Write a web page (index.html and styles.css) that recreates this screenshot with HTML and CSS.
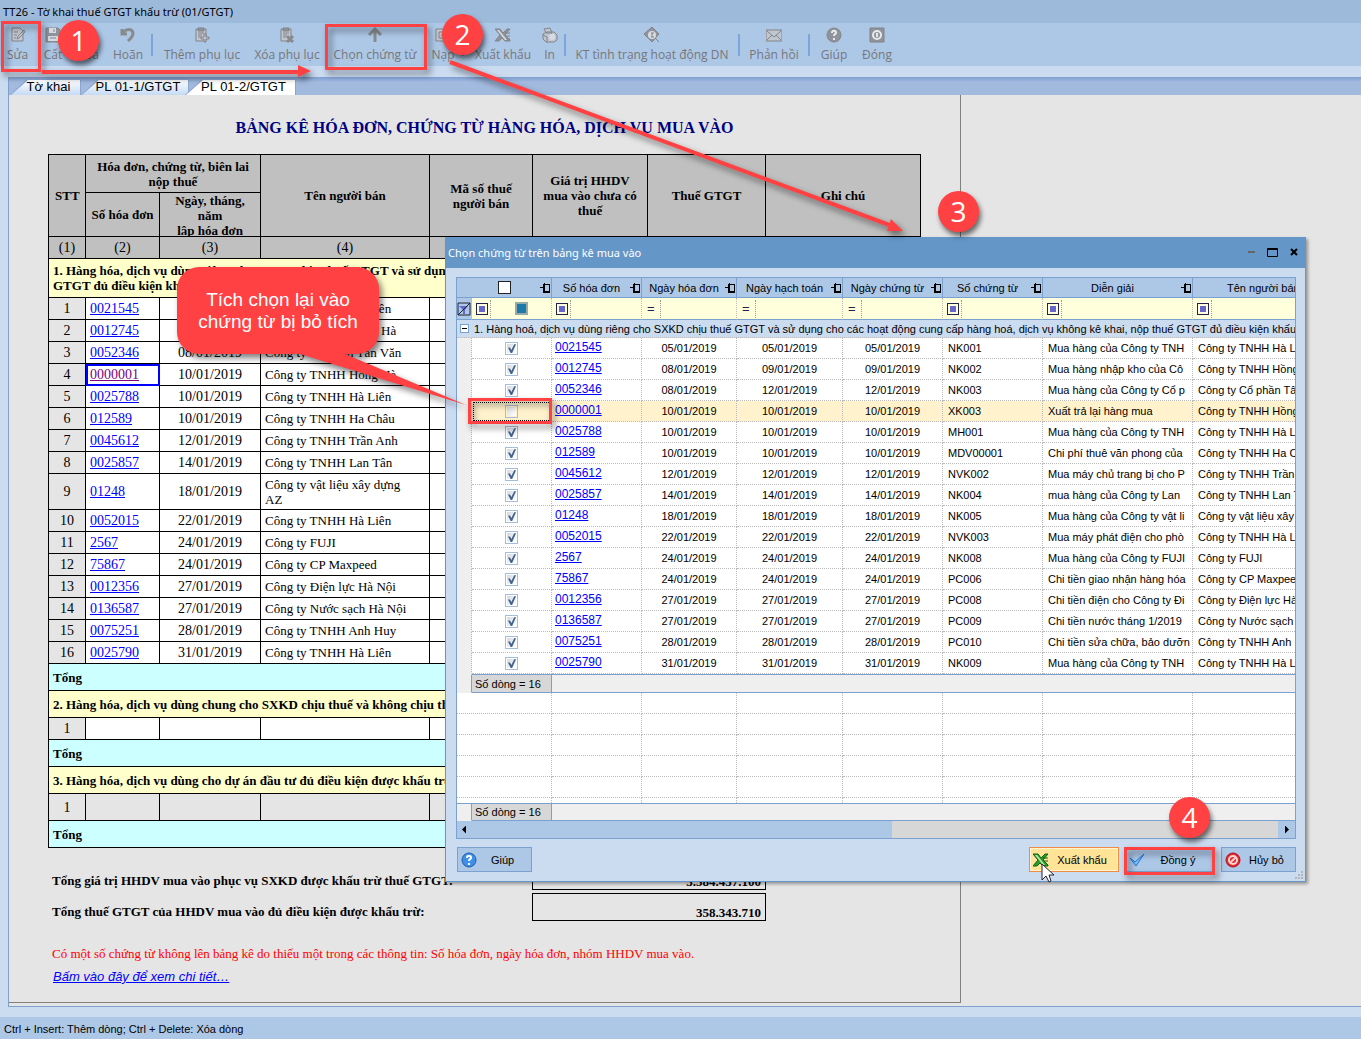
FILE: index.html
```html
<!DOCTYPE html>
<html lang="vi">
<head>
<meta charset="utf-8">
<title>TT26 - Tờ khai thuế GTGT khấu trừ (01/GTGT)</title>
<link rel="stylesheet" href="styles.css">
</head>
<body>
<header class="titlebar">TT26 - Tờ khai thuế GTGT khấu trừ (01/GTGT)</header>
<nav class="toolbar">
  <button class="tool"><svg viewBox="0 0 16 16"><path class="f" d="M2 1h8l3 3v10H2z"/><path d="M4 5h4M4 8h3M4 11h2M7 12l1-3 6-6 1 2-6 6z"/></svg>Sửa</button>
  <button class="tool"><svg viewBox="0 0 16 16"><path class="d" d="M1 1h12l2 2v12H1z"/><path class="l" d="M4 1h7v5H4zM3 9h10v5H3z"/><path d="M9 2v3M5 11h6"/></svg>Cất</button>
  <button class="tool"><svg viewBox="0 0 16 16"><path class="s" d="M3 3l10 10M13 3L3 13"/></svg>Xóa</button>
  <button class="tool"><svg viewBox="0 0 16 16"><path class="s" d="M3 6c2-4 9-5 10 0 0 4-3 6-5 8M2 2v5h5"/></svg>Hoãn</button>
  <i class="sep"></i>
  <button class="tool"><svg viewBox="0 0 16 16"><path class="f" d="M2 2h10v12H2z"/><path class="d" d="M4 1h6v3H4z"/><path d="M4 6h6M4 8h4M4 10h3"/><path class="f" d="M10 7h2v3h3v2h-3v3h-2v-3H7v-2h3z"/></svg>Thêm phụ lục</button>
  <button class="tool"><svg viewBox="0 0 16 16"><path class="f" d="M2 2h10v12H2z"/><path class="d" d="M4 1h6v3H4z"/><path d="M4 6h6M4 8h4M4 10h3"/><path class="s" d="M8 9l6 6M14 9l-6 6"/></svg>Xóa phụ lục</button>
  <button class="tool"><svg viewBox="0 0 16 16"><path class="s" d="M8 15V2M2 8l6-6 6 6"/></svg>Chọn chứng từ</button>
  <button class="tool"><svg viewBox="0 0 16 16"><path class="f" d="M1 2h13v12H1z"/><path d="M4 5h7v6H4zM6 8h3"/></svg>Nạp</button>
  <i class="drop"></i>
  <button class="tool"><svg viewBox="0 0 16 16"><path class="d" d="M0 2h5l3 4 4-4h3L10 8l5 5v1h-5l-3-3-3 3H0l5-6z"/><path class="l" d="M2 3h2l8 10h-2z"/><path d="M10 6h5M11 9h4M12 12h3"/></svg>Xuất khẩu</button>
  <button class="tool"><svg viewBox="0 0 16 16"><path class="f" d="M2 2l6-1 2 5H4zM1 7l4-2h7l3 3v5l-3 2H4l-3-3z"/><circle cx="10" cy="10" r="3" class="l"/><path d="M1 8l4 2v5"/></svg>In</button>
  <i class="sep"></i>
  <button class="tool"><svg viewBox="0 0 16 16"><path class="d" d="M8 0l7 7-7 8-8-8z"/><circle cx="8" cy="8" r="4" class="l"/><path d="M7 6h3M8 6v4M7 10h3M11 11l4 4"/></svg>KT tình trạng hoạt động DN</button>
  <i class="sep"></i>
  <button class="tool"><svg viewBox="0 0 16 16"><path class="f" d="M0 3h16v11H0z"/><path d="M1 4l7 6 7-6M1 13l5-5M15 13l-5-5"/></svg>Phản hồi</button>
  <i class="sep"></i>
  <button class="tool"><svg viewBox="0 0 16 16"><circle cx="8" cy="8" r="7" class="d"/><path class="w" d="M6 6c0-3 4-3 4 0 0 1-2 1-2 3M8 11v2"/></svg>Giúp</button>
  <button class="tool"><svg viewBox="0 0 16 16"><path class="d" d="M1 1h14v14H1z"/><circle cx="8" cy="8" r="4" class="w"/><path class="w" d="M8 6v4"/></svg>Đóng</button>
</nav>
<main class="panel">
  <div class="tabs">
    <button class="tab first">Tờ khai</button>
    <button class="tab second">PL 01-1/GTGT</button>
    <button class="tab active">PL 01-2/GTGT</button>
  </div>
  <section class="sheet">
    <h1>BẢNG KÊ HÓA ĐƠN, CHỨNG TỪ HÀNG HÓA, DỊCH VỤ MUA VÀO</h1>
    <table class="report">
      <colgroup><col class="r1"><col class="r2"><col class="r3"><col class="r4"><col class="r5"><col class="r6"><col class="r7"><col class="r8"></colgroup>
      <thead>
        <tr class="h1row"><th rowspan="2">STT</th><th colspan="2">Hóa đơn, chứng từ, biên lai nộp thuế</th><th rowspan="2">Tên người bán</th><th rowspan="2">Mã số thuế người bán</th><th rowspan="2">Giá trị HHDV mua vào chưa có thuế</th><th rowspan="2">Thuế GTGT</th><th rowspan="2">Ghi chú</th></tr>
        <tr class="h2row"><th>Số hóa đơn</th><th><div class="cut">Ngày, tháng, năm<br>lập hóa đơn</div></th></tr>
        <tr class="nums"><td>(1)</td><td>(2)</td><td>(3)</td><td>(4)</td><td></td><td></td><td></td><td></td></tr>
      </thead>
      <tbody>
        <tr class="group tall"><th colspan="8">1. Hàng hóa, dịch vụ dùng riêng cho SXKD chịu thuế GTGT và sử dụng cho các hoạt động<br>GTGT đủ điều kiện khấu trừ</th></tr>
      </tbody>
      <tbody id="report-rows"></tbody>
      <tbody>
        <tr class="total"><th colspan="8">Tổng</th></tr>
        <tr class="group"><th colspan="8">2. Hàng hóa, dịch vụ dùng chung cho SXKD chịu thuế và không chịu thuế</th></tr>
        <tr class="row"><td>1</td><td></td><td></td><td></td><td></td><td></td><td></td><td></td></tr>
        <tr class="total"><th colspan="8">Tổng</th></tr>
        <tr class="group"><th colspan="8">3. Hàng hóa, dịch vụ dùng cho dự án đầu tư đủ điều kiện được khấu trừ</th></tr>
        <tr class="row locked"><td>1</td><td></td><td></td><td></td><td></td><td></td><td></td><td></td></tr>
        <tr class="total"><th colspan="8">Tổng</th></tr>
      </tbody>
    </table>
    <dl class="sums">
      <dt>Tổng giá trị HHDV mua vào phục vụ SXKD được khấu trừ thuế GTGT:</dt><dd>3.584.437.100</dd>
      <dt>Tổng thuế GTGT của HHDV mua vào đủ điều kiện được khấu trừ:</dt><dd>358.343.710</dd>
    </dl>
    <p class="warn">Có một số chứng từ không lên bảng kê do thiếu một trong các thông tin: Số hóa đơn, ngày hóa đơn, nhóm HHDV mua vào.</p>
    <a class="more" href="#">Bấm vào đây để xem chi tiết…</a>
  </section>
</main>
<footer class="status">Ctrl + Insert: Thêm dòng; Ctrl + Delete: Xóa dòng</footer>

<section class="dialog" role="dialog" aria-labelledby="dlg-title">
  <header class="dlg-head"><h2 id="dlg-title">Chọn chứng từ trên bảng kê mua vào</h2>
    <button class="win" aria-label="Thu nhỏ"><svg viewBox="0 0 12 12"><path d="M2 5h7" stroke="#666" stroke-width="2"/></svg></button>
    <button class="win" aria-label="Phóng to"><svg viewBox="0 0 12 12"><path d="M.5 1.500h10v8H.5zM0 2.500h11" fill="none" stroke="#000"/></svg></button>
    <button class="win" aria-label="Đóng"><svg viewBox="0 0 12 12"><path d="M3 2l6 6M9 2L3 8" stroke="#000" stroke-width="2"/></svg></button>
  </header>
  <div class="grid-box">
    <table class="grid">
      <colgroup><col class="g0"><col class="g1"><col class="g2"><col class="g3"><col class="g4"><col class="g5"><col class="g6"><col class="g7"><col class="g8"></colgroup>
      <thead>
        <tr class="head"><th colspan="2"><div><input type="checkbox" class="all" aria-label="Chọn tất cả"></div></th><th><div>Số hóa đơn</div></th><th><div>Ngày hóa đơn</div></th><th><div>Ngày hạch toán</div></th><th><div>Ngày chứng từ</div></th><th><div>Số chứng từ</div></th><th><div>Diễn giải</div></th><th class="nopin"><div>Tên người bán</div></th></tr>
        <tr class="filter"><td class="funnel"><svg viewBox="0 0 14 14"><path d="M2 4h9L8 8v4H6V8z" fill="#66c"/><path d="M1 1h12v12H1zM1 13L13 1" fill="none" stroke="#223"/></svg></td><td><div><button class="op" aria-label="Điều kiện"><i></i></button><b class="mark"></b></div></td><td><div><button class="op" aria-label="Điều kiện"><i></i></button><input aria-label="Số hóa đơn"></div></td><td><div><button class="op eq">=</button><input aria-label="Ngày hóa đơn"></div></td><td><div><button class="op eq">=</button><input aria-label="Ngày hạch toán"></div></td><td><div><button class="op eq">=</button><input aria-label="Ngày chứng từ"></div></td><td><div><button class="op" aria-label="Điều kiện"><i></i></button><input aria-label="Số chứng từ"></div></td><td><div><button class="op" aria-label="Điều kiện"><i></i></button><input aria-label="Diễn giải"></div></td><td><div><button class="op" aria-label="Điều kiện"><i></i></button><input aria-label="Tên người bán"></div></td></tr>
      </thead>
      <tbody>
        <tr class="band"><td colspan="9"><div><button class="fold" aria-label="Thu gọn"></button>1. Hàng hoá, dịch vụ dùng riêng cho SXKD chịu thuế GTGT và sử dụng cho các hoạt động cung cấp hàng hoá, dịch vụ không kê khai, nộp thuế GTGT đủ điều kiện khấu trừ</div></td></tr>
      </tbody>
      <tbody id="grid-rows"></tbody>
      <tbody>
        <tr class="space"><td></td><td colspan="8"></td></tr>
        <tr class="count"><td></td><td>Số dòng = 16</td><td colspan="7"></td></tr>
      </tbody>
      <tbody id="blank-rows"></tbody>
      <tfoot><tr class="count foot"><td></td><td>Số dòng = 16</td><td colspan="7"></td></tr></tfoot>
    </table>
    <div class="scroll"><i class="left"></i><i class="thumb"></i><i class="right"></i></div>
  </div>
  <footer class="actions">
    <button class="btn small"><svg viewBox="0 0 16 16"><circle cx="8" cy="8" r="7" fill="#3d8fe8" stroke="#1c5da8"/><path d="M6 6c0-3 4-3 4 0 0 1-2 1-2 3M8 11v2" fill="none" stroke="#fff" stroke-width="2"/></svg><span>Giúp</span></button>
    <i class="fill"></i>
    <button class="btn hot"><svg viewBox="0 0 16 16"><path d="M0 2h5l3 4 4-4h3L10 8l5 5v1h-5l-3-3-3 3H0l5-6z" fill="#2c9a2c" stroke="#0b6410"/><path d="M2 3h2l8 10h-2z" fill="#bfeab0"/><path d="M10 6h5M11 9h4" stroke="#0b6410"/></svg><span>Xuất khẩu</span></button>
    <button class="btn"><svg viewBox="0 0 16 16"><path d="M1 6l5 4 9-8-8 12z" fill="#7cc0ff" stroke="#1e74cf"/></svg><span>Đồng ý</span></button>
    <button class="btn small"><svg viewBox="0 0 16 16"><circle cx="8" cy="8" r="7" fill="#e8262e" stroke="#b3131a"/><circle cx="8" cy="8" r="4" fill="none" stroke="#ffd6d6" stroke-width="2"/><path d="M5 11l6-6" stroke="#ffd6d6" stroke-width="2"/></svg><span>Hủy bỏ</span></button>
  </footer>
  <svg class="grip" viewBox="0 0 9 9"><path d="M6 0h2v2H6zM3 3h2v2H3zM6 3h2v2H6zM0 6h2v2H0zM3 6h2v2H3zM6 6h2v2H6z" fill="#b5b5b5"/></svg>
</section>

<svg class="notes" width="1361" height="1039" viewBox="0 0 1361 1039">
  <g fill="none" stroke="#ff4143" stroke-width="3">
    <path d="M2.500 22.500h37v48h-37zM326.500 25.500h99v43h-99zM469.500 399.500h81v23h-81zM1125.500 848.500h88v25h-88z"/>
    <path d="M42 72h258M450 62l442 164" stroke-width="4"/>
  </g>
  <path fill="#ff4143" d="M298 65l13 6-13 6zM891 219l12 12-16 0zM199 267h158a22 22 0 0 1 22 22v43a22 22 0 0 1-22 22h-12l121 51-166-51H199a22 22 0 0 1-22-22v-43a22 22 0 0 1 22-22z"/>
</svg>
<svg class="pointer" viewBox="0 0 14 20"><path d="M1 1v16l4-4 3 6 2-1-2-6h5z" fill="#fff" stroke="#223"/></svg>
<p class="callout">Tích chọn lại vào<br>chứng từ bị bỏ tích</p>
<b class="step s1">1</b><b class="step s2">2</b><b class="step s3">3</b><b class="step s4">4</b>
<script src="app.js"></script>
</body>
</html>
```
FILE: styles.css
```css
* { box-sizing: border-box; }
body {
  margin: 0; min-height: 100vh; display: flex; flex-direction: column; position: relative;
  background: #cbdbf0; color: #000; overflow-x: hidden;
  font: 11px/14px "Liberation Sans", Arial, sans-serif;
}
button { font: inherit; color: inherit; border: 0; padding: 0; background: none; }
i { font-style: normal; }
.titlebar { height: 23px; padding: 0 3px; background: #9dbada; font: 11px/23px "Noto Sans", sans-serif; white-space: nowrap; }
.toolbar {
  height: 43px; background: #adc7e7; display: grid; align-items: center;
  grid-template-columns: 35px 36px 35px 44px 4px 96px 74px 102px 34px 10px 66px 27px 4px 170px 4px 66px 4px 46px 40px;
}
.tool { display: flex; flex-direction: column; align-items: center; justify-content: center; gap: 3px; color: #777; font: 12px/17px "Open Sans", sans-serif; white-space: nowrap; min-width: 0; }
.tool svg { width: 16px; height: 16px; fill: none; stroke: #7d7d7d; opacity: .9; }
.tool .f { fill: #c4c8ce; }
.tool .d { fill: #8c8f94; }
.tool .l { fill: #dcdfe4; stroke: none; }
.tool .s { stroke-width: 3; stroke: #858585; }
.tool .w { stroke: #eee; stroke-width: 2; }
.sep { width: 2px; height: 22px; margin-left: 1px; background: #7aa6dc; }
.drop { border: 3px solid transparent; border-top-color: #777; width: 6px; margin-top: 22px; }

.panel { margin: 11px 0 10px 8px; flex: 1; border-left: 1px solid #7f9fcf; border-bottom: 1px solid #7f9fcf; background: #e5e5e5; }
.tabs { height: 18px; display: flex; align-items: flex-end; background: linear-gradient(#7f9fd2, #a3badf 5px); }
.tab { position: relative; height: 16px; background: #8aa6d0; clip-path: polygon(17px 0, 100% 0, 100% 100%, 0 100%); padding-left: 6px; font-size: 13px; line-height: 16px; z-index: 0; }
.tab::before { content: ""; position: absolute; inset: 1px 1px 0 1px; z-index: -1; background: linear-gradient(#fff, #c5daf5); clip-path: polygon(17px 0, 100% 0, 100% 100%, 0 100%); }
.tab.active::before { background: #fff; }
.first { width: 71px; margin-left: 1px; }
.second { width: 108px; }
.tab.active { width: 111px; margin-left: -4px; }

.sheet { width: fit-content; padding: 25px 39px 16px; border-right: 1px solid #808080; border-bottom: 1px solid #808080; margin-bottom: 3px; font: 14px/15px "Liberation Serif", "Times New Roman", serif; }
.sheet h1 { margin: 0; height: 34px; text-align: center; color: navy; font-size: 16px; line-height: 16px; }
.report { border-collapse: collapse; table-layout: fixed; width: 873px; }
.r1 { width: 37px } .r2 { width: 74px } .r3 { width: 101px } .r4 { width: 169px } .r5 { width: 103px } .r6 { width: 115px } .r7 { width: 118px } .r8 { width: 155px }
.report th, .report td { border: 1px solid #000; padding: 0 4px; overflow: hidden; }
.report thead { background: #c0c0c0; text-align: center; }
.report thead th { font-size: 13px; padding: 0 6px; }
.report .h2row th:first-child { padding: 0; }
.h1row { height: 38px } .h2row { height: 44px } .nums { height: 22px }
.report .cut { height: 43px; overflow: hidden; }
.report tbody th { text-align: left; font-size: 13px; }
.group { height: 27px; background: #ffffcc; }
.group.tall { height: 39px; white-space: nowrap; }
.total { height: 27px; background: #ccffff; }
.row { height: 22px; background: #fff; }
.row.two { height: 36px; }
.row td:first-child { background: #e5e5e5; text-align: center; }
.row td:nth-child(3) { text-align: center; }
.row td:nth-child(4) { font-size: 13px; }
.row.two td:nth-child(4) { padding-right: 20px; }
.locked { background: #e5e5e5; height: 27px; }
a { color: #00f; }
.report .here { outline: 2px solid #00f; outline-offset: -2px; }
.here a { color: purple; }
.sums { margin: 14px 0 0; display: grid; grid-template-columns: 484px 234px; row-gap: 3px; font-weight: bold; font-size: 13px; }
.sums dt { padding: 11px 4px 0; white-space: nowrap; overflow: hidden; }
.sums dd { margin: 0; height: 28px; border: 1px solid #000; text-align: right; padding: 11px 4px 0; }
.warn { margin: 24px 0 0; padding-left: 4px; color: #f00; font-size: 13px; line-height: 18px; white-space: nowrap; }
.more { display: inline-block; margin: 5px 5px 0; font: italic 13px/18px "Liberation Sans", sans-serif; }
.status { height: 22px; background: #adc7e7; padding: 0 4px; line-height: 24px; }

.dialog { position: absolute; left: 445px; top: 237px; width: 861px; border: 1px solid #6496c8; background: #cbdbf0; box-shadow: 2px 2px 3px rgba(0,0,0,.35); }
.dlg-head { height: 30px; background: #6496c8; display: flex; align-items: center; padding: 0 5px 0 2px; gap: 9px; }
.dlg-head h2 { margin: 0; flex: 1; color: #fff; font: 11px/30px "Noto Sans", sans-serif; }
.win, .win svg { width: 12px; height: 12px; display: block; }
.grid-box { margin: 9px 9px 0 10px; border: 1px solid #7ba1d0; background: #fff; overflow: hidden; }
.grid { width: 100%; table-layout: fixed; border-collapse: separate; border-spacing: 0; }
.g0 { width: 15px } .g1 { width: 80px } .g2 { width: 90px } .g3 { width: 95px } .g4 { width: 106px } .g5, .g6 { width: 100px } .g7 { width: 150px } .g8 { width: auto }
.grid th, .grid td { padding: 0; font-weight: normal; overflow: hidden; white-space: nowrap; border-right: 1px dotted #bbb; border-bottom: 1px dotted #bbb; }
.grid td:last-child, .grid th:last-child { border-right: 0; }
.grid .head th { height: 20px; background: #adc7e7; border-right: 1px solid #7ba1d0; border-bottom: 1px solid #7ba1d0; }
.head div { display: flex; align-items: center; justify-content: center; position: relative; padding-right: 10px; height: 19px; }
.head th:first-child div { padding: 0; }
.grid .head .nopin { border-right: 0; }
.head .nopin div { padding: 0 0 0 34px; justify-content: flex-start; }
.head div::before { content: ""; position: absolute; right: 1px; top: 6px; width: 5px; height: 6px; border: 1px solid #000; border-bottom-width: 2px; }
.head div::after { content: ""; position: absolute; right: 6px; top: 5px; width: 4px; height: 8px; border-right: 1px solid #000; background: linear-gradient(#000, #000) 0 4px / 4px 1px no-repeat; }
.head .nopin div::before, .head .nopin div::after { content: none; }
.all { appearance: none; margin: 0; width: 13px; height: 13px; border: 1px solid #222; background: #fff; }
.grid .filter td { height: 22px; background: #ffffdc; border-bottom: 1px solid #7ba1d0; }
.grid .filter .funnel { background: #adc7e7; }
.funnel svg { width: 14px; height: 14px; display: block; }
.filter div { display: flex; align-items: center; height: 20px; }
.filter input { flex: 1; width: 0; height: 18px; border: 0; padding: 0 3px; background: transparent; font: inherit; }
.op { flex: none; width: 19px; height: 18px; border-right: 1px dotted #999; padding-left: 4px; display: flex; align-items: center; }
.op i { width: 12px; height: 12px; border: 1px solid #225; background: #66c content-box; padding: 2px; }
.eq { padding-left: 5px; color: #225; font-size: 13px; }
.mark { width: 13px; height: 13px; border: 2px solid #9aa; background: #1c7aa8; margin-left: 24px; }
.grid .band td { height: 18px; background: #cbdbf0; }
.band div { display: flex; align-items: center; gap: 5px; padding-left: 3px; }
.fold { flex: none; width: 9px; height: 9px; border: 1px solid #7ba1d0; background: linear-gradient(#000, #000) 1px 3px / 5px 1px no-repeat #fff; }
.line td { height: 21px; }
.grid .line td:first-child, .grid .space td:first-child { background: #efefef; border-bottom-color: #efefef; }
.line td:nth-child(2) { text-align: center; }
.line td:nth-child(3) { padding: 0 0 2px 3px; font-size: 12px; }
.line td:nth-child(4), .line td:nth-child(5), .line td:nth-child(6) { text-align: center; }
.grid .line td:nth-child(n+7) { padding-left: 5px; }
.line.cur { background: #fff2cc; }
.cur td:nth-child(2) { outline: 1px dotted #000; outline-offset: -2px; }
.pick { appearance: none; width: 13px; height: 13px; margin: 0; border: 1px solid #a5bcdc; background: linear-gradient(135deg, #d5dae2, #fff) content-box #fff; padding: 1px; display: inline-block; vertical-align: middle; position: relative; }
.pick:checked::after { content: ""; position: absolute; left: 2px; top: 1px; width: 8px; height: 9px; background: #42628f; clip-path: polygon(0 35%, 25% 35%, 42% 62%, 78% 0, 100% 0, 50% 100%, 35% 100%); }
.grid .space td { height: 1px; border-bottom: 1px solid #7ba1d0; }
.grid .space td:first-child { border-bottom: 1px solid #efefef; }
.grid .count td { height: 18px; background: #efefef; border: 0; border-bottom: 1px solid #7ba1d0; }
.grid .count td:first-child { border-bottom-color: #efefef; border-right: 1px solid #7ba1d0; }
.grid .count td:nth-child(2) { background: #d7d7d7; border-right: 1px solid #7ba1d0; padding-left: 3px; }
.grid .foot td { border-top: 1px solid #7ba1d0; }
.blank td { height: 21px; }
.blank.end td { height: 5px; border-bottom: 0; }
.scroll { height: 17px; display: grid; grid-template-columns: 435px 1fr 17px; align-items: center; background: #adc7e7; }
.scroll .left { margin-left: 5px; width: 4px; height: 8px; background: #000; clip-path: polygon(100% 0, 100% 100%, 0 50%); }
.scroll .thumb { height: 17px; background: #d7d7d7; }
.scroll .right { margin-left: 7px; width: 4px; height: 8px; background: #000; clip-path: polygon(0 0, 100% 50%, 0 100%); }
.actions { display: flex; gap: 6px; padding: 8px 9px 9px 11px; }
.fill { flex: 1; }
.btn { width: 90px; height: 25px; border: 1px solid #7ba1d0; background: #adc7e7; display: flex; align-items: center; padding: 0 3px; }
.btn.small { width: 75px; }
.btn svg { width: 16px; height: 16px; }
.btn span { flex: 1; text-align: center; }
.btn.hot { border-color: #f08c46; background: #ffe397; box-shadow: inset 0 0 0 1px #fff5d5; }
.grip { position: absolute; right: 1px; bottom: 1px; width: 9px; height: 9px; }

.notes { position: absolute; left: 0; top: 0; pointer-events: none; filter: drop-shadow(3px 4px 3px rgba(0,0,0,.5)); }
.pointer { position: absolute; left: 1041px; top: 863px; width: 14px; height: 20px; }
.callout { position: absolute; left: 177px; top: 289px; width: 202px; margin: 0; text-align: center; color: #fff; font-size: 19px; line-height: 22px; }
.step { position: absolute; width: 41px; height: 41px; border-radius: 50%; background: #ff4143; color: #fff; text-align: center; font: 28px/40px "Open Sans", sans-serif; box-shadow: 2px 4px 5px rgba(0,0,0,.55); }
.s1 { left: 58px; top: 20px } .s2 { left: 442px; top: 14px } .s3 { left: 938px; top: 191px } .s4 { left: 1169px; top: 797px }
```
FILE: app.js
```js
// so hoa don | ngay hoa don | ngay hach toan | so chung tu | dien giai | nguoi ban
const rows = `0021545|05/01|05/01|NK001|Mua hàng của Công ty TNH|Công ty TNHH Hà Liên
0012745|08/01|09/01|NK002|Mua hàng nhập kho của Cô|Công ty TNHH Hồng Hà
0052346|08/01|12/01|NK003|Mua hàng của Công ty Cổ p|Công ty Cổ phần Tân Văn
0000001|10/01|10/01|XK003|Xuất trả lại hàng mua|Công ty TNHH Hồng Hà
0025788|10/01|10/01|MH001|Mua hàng của Công ty TNH|Công ty TNHH Hà Liên
012589|10/01|10/01|MDV00001|Chi phí thuê văn phong của|Công ty TNHH Ha Châu
0045612|12/01|12/01|NVK002|Mua máy chủ trang bị cho P|Công ty TNHH Trần Anh
0025857|14/01|14/01|NK004|mua hàng của Công ty Lan|Công ty TNHH Lan Tân
01248|18/01|18/01|NK005|Mua hàng của Công ty vật li|Công ty vật liệu xây dựng AZ
0052015|22/01|22/01|NVK003|Mua máy phát điện cho phò|Công ty TNHH Hà Liên
2567|24/01|24/01|NK008|Mua hàng của Công ty FUJI|Công ty FUJI
75867|24/01|24/01|PC006|Chi tiền giao nhận hàng hóa|Công ty CP Maxpeed
0012356|27/01|27/01|PC008|Chi tiền điện cho Công ty Đi|Công ty Điện lực Hà Nội
0136587|27/01|27/01|PC009|Chi tiền nước tháng 1/2019|Công ty Nước sạch Hà Nội
0075251|28/01|28/01|PC010|Chi tiền sửa chữa, bảo dưỡn|Công ty TNHH Anh Huy
0025790|31/01|31/01|NK009|Mua hàng của Công ty TNH|Công ty TNHH Hà Liên`.split("\n").map(r => r.split("|"));

document.getElementById("report-rows").innerHTML = rows.map(([no, inv, , , , seller], i) =>
  `<tr class="row${i === 8 ? " two" : ""}"><td>${i + 1}</td><td${i === 3 ? ' class="here"' : ""}><a href="#">${no}</a></td><td>${inv}/2019</td><td>${seller}</td><td></td><td></td><td></td><td></td></tr>`).join("");

document.getElementById("grid-rows").innerHTML = rows.map(([no, inv, post, doc, note, seller], i) =>
  `<tr class="line${i === 3 ? " cur" : ""}"><td></td><td><input type="checkbox" class="pick" aria-label="${no}"${i === 3 ? "" : " checked"}></td><td><a href="#">${no}</a></td><td>${inv}/2019</td><td>${post}/2019</td><td>${post}/2019</td><td>${doc}</td><td>${note}</td><td>${seller}</td></tr>`).join("");

const blank = cls => `<tr class="${cls}"><td colspan="2"></td>${"<td></td>".repeat(7)}</tr>`;
document.getElementById("blank-rows").innerHTML = blank("blank").repeat(5) + blank("blank end");
```
